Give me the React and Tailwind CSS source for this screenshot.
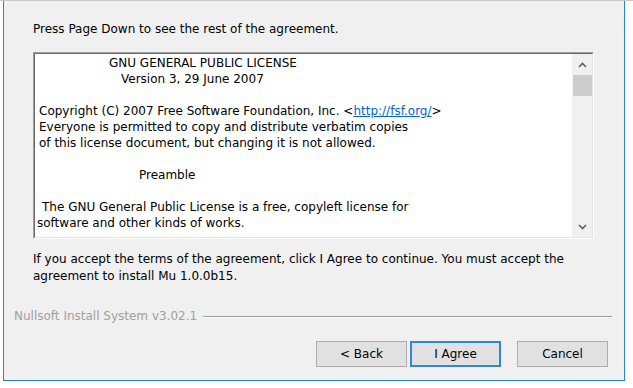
import React from 'react'

function Chevron({ up }) {
  return (
    <svg width="9" height="6" viewBox="0 0 9 6" className="block">
      <path
        d={up ? 'M1 5 L4.5 1.5 L8 5' : 'M1 1 L4.5 4.5 L8 1'}
        fill="none"
        stroke="#606060"
        strokeWidth="1.6"
      />
    </svg>
  )
}

function Button({ children, focused }) {
  return (
    <div
      className={
        'w-[91px] h-[26px] flex items-center justify-center bg-[#e1e1e1] text-black ' +
        (focused ? 'border-2 border-[#2f86dc]' : 'border border-[#adadad]')
      }
    >
      {children}
    </div>
  )
}

export default function App() {
  return (
    <div
      className="w-[633px] h-[388px] bg-white overflow-hidden text-[12px] text-black"
      style={{ fontFamily: '"DejaVu Sans", Verdana, sans-serif' }}
    >
      <div className="h-px bg-[#c8c8c8]" />
      <div className="ml-[3px] w-[622px] h-[380px] bg-[#f0f0f0] border-x border-b border-[#2b7fd6] flex flex-col">
        <div className="pl-[29px] pt-[20px] leading-[16px]">
          Press Page Down to see the rest of the agreement.
        </div>

        <div className="ml-[29px] mt-[15px] w-[561px] h-[187px] border border-t-[#a0a0a0] border-l-[#a0a0a0] border-r-white border-b-white">
          <div className="h-full flex border border-t-[#696969] border-l-[#696969] border-r-[#e3e3e3] border-b-[#e3e3e3] bg-white">
            <div className="flex-1 pl-[4px] pt-[1px] leading-[16px] whitespace-nowrap overflow-hidden">
              <div className="pl-[70px]">GNU GENERAL PUBLIC LICENSE</div>
              <div className="pl-[82px]">Version 3, 29 June 2007</div>
              <div className="h-[16px]" />
              <div>
                Copyright (C) 2007 Free Software Foundation, Inc. &lt;
                <span className="text-[#0066cc] underline">http://fsf.org/</span>&gt;
              </div>
              <div>Everyone is permitted to copy and distribute verbatim copies</div>
              <div>of this license document, but changing it is not allowed.</div>
              <div className="h-[16px]" />
              <div className="pl-[100px]">Preamble</div>
              <div className="h-[16px]" />
              <div className="pl-[3px]">The GNU General Public License is a free, copyleft license for</div>
              <div className="ml-[-2px]">software and other kinds of works.</div>
            </div>
            <div className="w-[20px] bg-[#f0f0f0] flex flex-col items-center">
              <div className="h-[21px] flex items-center justify-center">
                <Chevron up />
              </div>
              <div className="w-[19px] h-[21px] bg-[#cdcdcd]" />
              <div className="flex-1" />
              <div className="h-[21px] flex items-center justify-center">
                <Chevron />
              </div>
            </div>
          </div>
        </div>

        <div className="pl-[29px] mt-[12px] leading-[17px]">
          If you accept the terms of the agreement, click I Agree to continue. You must accept the
          <br />
          agreement to install Mu 1.0.0b15.
        </div>

        <div className="mt-[23px] flex items-center pl-[10px] pr-[12px]">
          <span className="text-[#a0a0a0] leading-[16px]">Nullsoft Install System v3.02.1</span>
          <div className="flex-1 ml-[6px] mt-[2px] border-t border-[#a0a0a0] border-b border-b-white" />
        </div>

        <div className="mt-[17px] flex pl-[312px]">
          <Button>&lt; Back</Button>
          <div className="ml-[3px]">
            <Button focused>I Agree</Button>
          </div>
          <div className="ml-[16px]">
            <Button>Cancel</Button>
          </div>
        </div>
      </div>
    </div>
  )
}
